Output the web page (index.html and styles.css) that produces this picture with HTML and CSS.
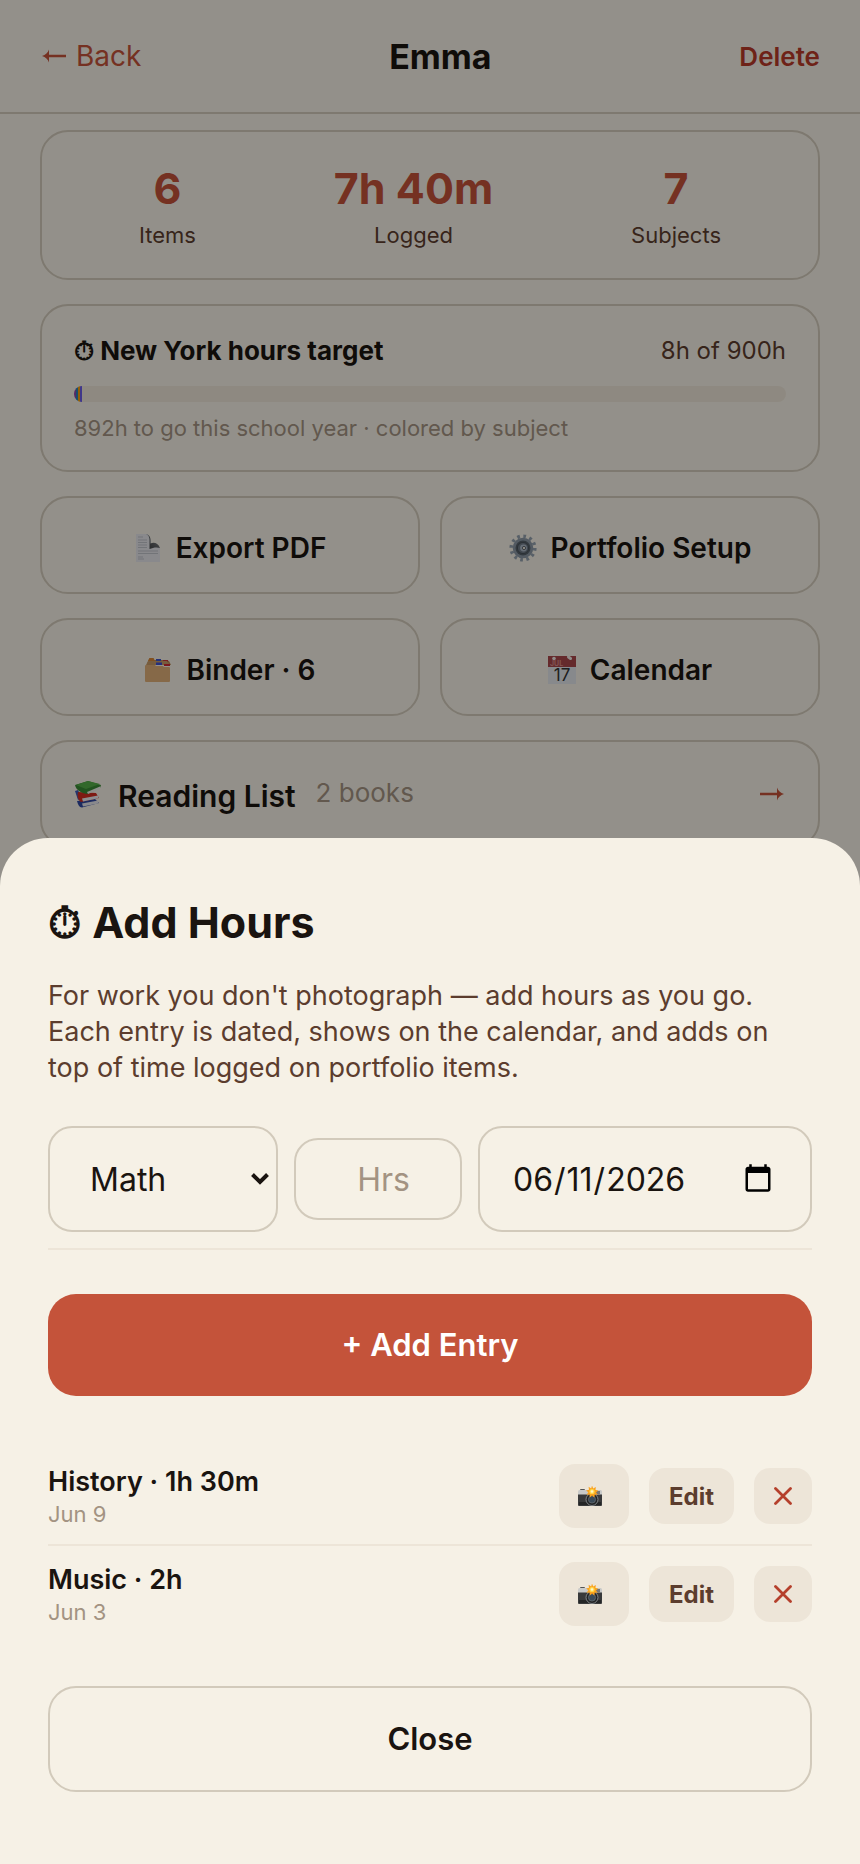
FILE: index.html
```html
<!DOCTYPE html>
<html lang="en">
<head>
  <meta charset="UTF-8" />
  <meta name="viewport" content="width=device-width, initial-scale=1.0" />
  <title>Emma - Add Hours</title>
  <link rel="stylesheet" href="styles.css">
</head>
<body>
  <svg class="defs" width="0" height="0" aria-hidden="true">
    <symbol id="icon-cross" viewBox="0 0 18 18">
      <path d="M1.5 1.5l15 15M16.500 1.5l-15 15" fill="none" stroke="currentColor" stroke-width="2.800" stroke-linecap="round" />
    </symbol>
    <symbol id="icon-camera" viewBox="0 0 24 20">
      <rect x="2" y="3" width="5" height="3" rx="1" fill="#555" />
      <rect x="0" y="4" width="24" height="6" rx="1.500" fill="#c9cac9" />
      <rect x="18" y="5" width="4" height="3" fill="#777" />
      <path d="M0 8.500h24V19a1 1 0 0 1-1 1H1a1 1 0 0 1-1-1z" fill="#38393a" />
      <rect x="1" y="16" width="22" height="3" fill="#242526" />
      <circle cx="14" cy="13.500" r="6" fill="#202224" stroke="#8a8d90" stroke-width="0.9" />
      <circle cx="14" cy="13.500" r="3.600" fill="#3a4a58" stroke="#777c80" stroke-width="0.6" />
      <path d="M14 -0.500l1.200 3 2.600-1.600-.3 3.100 2.800.6-2.300 1.800 1.800 2.400-3-.2-.5 2.900-2.200-2-2.300 2-.3-3-3 .2 1.900-2.400-2.300-1.800 2.900-.7-.4-3 2.600 1.600z" fill="#fba31c" />
      <circle cx="14" cy="5.500" r="2.600" fill="#ffd84a" />
      <circle cx="14" cy="5.500" r="1.300" fill="#fff6c8" />
    </symbol>
  </svg>

  <header class="topbar">
    <a href="#" class="back">
      <svg class="arrow" viewBox="0 0 24 14" aria-hidden="true"><path d="M7 0.500C6 3.500 3.500 6 0 7c3.500 1 6 3.500 7 6.500V8.200h17V5.800H7z" fill="currentColor" /></svg>
      Back
    </a>
    <h1>Emma</h1>
    <button type="button" class="delete">Delete</button>
  </header>

  <main class="page">
    <section class="card stats">
      <div class="stat"><strong>6</strong><span>Items</span></div>
      <div class="stat"><strong>7h 40m</strong><span>Logged</span></div>
      <div class="stat"><strong>7</strong><span>Subjects</span></div>
    </section>

    <section class="card target">
      <div class="target-head">
        <h2>⏱ New York hours target</h2>
        <span>8h of 900h</span>
      </div>
      <div class="bar">
        <i class="seg history" style="width: 0.28%"></i>
        <i class="seg science" style="width: 0.28%"></i>
        <i class="seg math" style="width: 0.28%"></i>
        <i class="seg music" style="width: 0.28%"></i>
      </div>
      <p class="target-note">892h to go this school year · colored by subject</p>
    </section>

    <div class="tiles">
      <button type="button" class="tile">
        <svg class="emoji" viewBox="0 0 28 28" aria-hidden="true">
          <defs>
            <linearGradient id="fold" x1="0" y1="1" x2="1" y2="0"><stop offset="0" stop-color="#3c3e40" /><stop offset="0.600" stop-color="#6c6f72" /><stop offset="1" stop-color="#b0b2b4" /></linearGradient>
          </defs>
          <path d="M2 0h12c2 4 3 8 3 9 3 1 7 2 9 5v14H2z" fill="#e4e5ea" />
          <path d="M12 0c4 1 5 4 4.500 9.500C20 8 24 9 26 14c-3-1-7-.5-10.500 1V6c0-3-1-5-3.500-6z" fill="url(#fold)" />
          <path d="M4 3h5M4 6h9M4 8.500h9M4 11h9M4 13.500h9M4 17h20M4 19.500h20M4 23h5M4 25h6" stroke="#bfc1c8" stroke-width="1" />
        </svg>
        Export PDF
      </button>
      <button type="button" class="tile">
        <svg class="emoji" viewBox="0 0 28 28" aria-hidden="true">
          <circle cx="14" cy="14" r="11.800" fill="none" stroke="#93a0ae" stroke-width="3.600" stroke-dasharray="2.700 3.478" />
          <circle cx="14" cy="14" r="8.300" fill="none" stroke="#8a97a4" stroke-width="4" />
          <circle cx="14" cy="14" r="7.500" fill="#56606a" />
          <circle cx="14" cy="14" r="5.600" fill="#6f7a86" stroke="#48515a" stroke-width="1" />
          <circle cx="14.500" cy="14" r="3.400" fill="#aab6c4" />
          <circle cx="15" cy="14" r="1.600" fill="#f6f1e6" stroke="#424950" stroke-width="0.800" />
        </svg>
        Portfolio Setup
      </button>
      <button type="button" class="tile">
        <svg class="emoji" viewBox="0 0 28 28" aria-hidden="true">
          <path d="M3 8l2-5 1-1h3l1 2h11l4 1 2 4z" fill="#b98b56" />
          <path d="M4 5l1.500-3h4L11 5z" fill="#d98634" />
          <rect x="12" y="3" width="5" height="2" fill="#3f56c8" />
          <rect x="19" y="4" width="5" height="2" fill="#c8323a" />
          <path d="M2 9l2-4h19l3 4z" fill="#c79a66" />
          <rect x="12" y="6.500" width="6" height="2.500" fill="#3c4fd0" />
          <rect x="20" y="8" width="6" height="2" fill="#cc2a36" />
          <path d="M1 10a1 1 0 0 1 1-1h9l1 1h7l1 1h5a1 1 0 0 1 1 1v13a1 1 0 0 1-1 1H2a1 1 0 0 1-1-1z" fill="#e0b078" />
        </svg>
        Binder · 6
      </button>
      <button type="button" class="tile">
        <svg class="emoji" viewBox="0 0 28 28" aria-hidden="true">
          <rect width="28" height="28" fill="#e2e4ea" />
          <rect width="28" height="11" fill="#a8474a" />
          <circle cx="6" cy="2.500" r="1.800" fill="#f0e8e4" />
          <path d="M20.500 1l2 1.500" stroke="#f0e8e4" stroke-width="3" stroke-linecap="round" />
          <text x="2" y="10" class="cal-month">JUL</text>
          <text x="14" y="25" class="cal-day" text-anchor="middle">17</text>
        </svg>
        Calendar
      </button>
    </div>

    <a href="#" class="card reading">
      <svg class="emoji" viewBox="0 0 28 28" aria-hidden="true">
        <path d="M3 21l18-2 4 4-17 4.500c-3 0-4-3-5-6.500z" fill="#3048a0" />
        <path d="M8 23.500l16-3 .5 3L9 26.500z" fill="#e4e4ea" />
        <path d="M1 11l3-1 4 8-4 2z" fill="#3d5bb8" />
        <path d="M4 12l18 1 3 5-18 4c-3-2-4-5-3-10z" fill="#d22c20" />
        <path d="M8 18.500l16-3 .5 2.700L9 21.500z" fill="#ececf0" />
        <path d="M1 5l13-4 13 4-1 3-13 6C7 13 2 10 1 5z" fill="#3a8a36" />
        <path d="M2 5l12-4 12 3-14 5z" fill="#54ae48" />
        <path d="M13 12l13-5.500v2.500l-12 5z" fill="#eceee8" />
      </svg>
      <span class="reading-title">Reading List</span>
      <span class="reading-count">2 books</span>
      <svg class="arrow" viewBox="0 0 24 14" aria-hidden="true"><path d="M17 0.500c1 3 3.500 5.500 7 6.500-3.500 1-6 3.500-7 6.500V8.200H0V5.800h17z" fill="currentColor" /></svg>
    </a>
  </main>

  <div class="backdrop">
    <div class="sheet" role="dialog" aria-labelledby="sheet-title">
      <h2 id="sheet-title">⏱ Add Hours</h2>
      <p class="intro">For work you don't photograph — add hours as you go. Each entry is dated, shows on the calendar, and adds on top of time logged on portfolio items.</p>

      <form id="hours-form" onsubmit="return false">
        <div class="fields">
          <select class="field subject" aria-label="Subject">
            <option>Math</option>
            <option>History</option>
            <option>Music</option>
          </select>
          <input type="number" class="field hours" placeholder="Hrs" aria-label="Hours" />
          <input type="date" class="field date" value="2026-06-11" aria-label="Date" />
        </div>
        <button type="submit" class="add">+ Add Entry</button>
      </form>

      <ul class="entries">
        <li class="entry">
          <div class="entry-text">
            <strong>History · 1h 30m</strong>
            <span>Jun 9</span>
          </div>
          <button type="button" class="chip photo" aria-label="Add photo"><svg aria-hidden="true"><use href="#icon-camera" /></svg></button>
          <button type="button" class="chip">Edit</button>
          <button type="button" class="chip remove" aria-label="Remove"><svg aria-hidden="true"><use href="#icon-cross" /></svg></button>
        </li>
        <li class="entry">
          <div class="entry-text">
            <strong>Music · 2h</strong>
            <span>Jun 3</span>
          </div>
          <button type="button" class="chip photo" aria-label="Add photo"><svg aria-hidden="true"><use href="#icon-camera" /></svg></button>
          <button type="button" class="chip">Edit</button>
          <button type="button" class="chip remove" aria-label="Remove"><svg aria-hidden="true"><use href="#icon-cross" /></svg></button>
        </li>
      </ul>

      <button type="button" class="close">Close</button>
    </div>
  </div>
</body>
</html>
```
FILE: styles.css
```css
* {
  box-sizing: border-box;
}

body {
  margin: 0;
  font-family: Inter, sans-serif;
  background: #f6f1e6;
  color: #1a1410;
}

h1, h2, p, ul {
  margin: 0;
  padding: 0;
}

button, input, select {
  font-family: inherit;
  color: inherit;
  margin: 0;
}

button {
  cursor: pointer;
}

a {
  color: inherit;
  text-decoration: none;
}

.defs {
  position: absolute;
}

.arrow {
  width: 24px;
  height: 14px;
  color: #c4533a;
}

.emoji {
  width: 28px;
  height: 28px;
  flex: none;
}

/* header */
.topbar {
  display: flex;
  align-items: center;
  justify-content: space-between;
  min-height: 114px;
  padding: 0 40px;
  border-bottom: 2px solid #d2cabb;
}

.back {
  display: flex;
  align-items: center;
  gap: 10px;
  padding-left: 2px;
  font-size: 28px;
  color: #c4533a;
}

.topbar h1 {
  font-size: 34px;
  font-weight: 700;
}

.delete {
  padding: 0;
  border: none;
  background: none;
  font-size: 26px;
  font-weight: 600;
  color: #b83a28;
}

/* cards */
.page {
  display: flex;
  flex-direction: column;
  gap: 24px;
  padding: 16px 40px;
}

.card {
  padding: 28px;
  border: 2px solid #d2cabb;
  border-radius: 28px;
}

.stats {
  display: flex;
  justify-content: space-around;
}

.stat {
  display: flex;
  flex-direction: column;
  align-items: center;
  gap: 4px;
}

.stat strong {
  font-size: 43px;
  line-height: 56px;
  color: #c4533a;
}

.stat span {
  font-size: 22px;
  line-height: 30px;
  color: #5c3d2e;
}

.target {
  padding: 28px 32px;
}

.target-head {
  display: flex;
  justify-content: space-between;
  align-items: center;
  line-height: 34px;
}

.target-head h2 {
  font-size: 26px;
  font-weight: 700;
}

.target-head span {
  font-size: 24px;
  color: #5c3d2e;
}

.bar {
  display: flex;
  height: 16px;
  margin: 18px 0 12px;
  border-radius: 8px;
  background: #ede5d8;
  overflow: hidden;
}

.history { background: #8e44ad; }
.science { background: #2980b9; }
.math { background: #f59e0b; }
.music { background: #6c5ce7; }

.target-note {
  font-size: 22px;
  line-height: 28px;
  color: #a39382;
}

.tiles {
  display: grid;
  grid-template-columns: 1fr 1fr;
  gap: 24px 20px;
}

.tile {
  display: flex;
  align-items: center;
  justify-content: center;
  gap: 14px;
  padding: 32px 24px 26px;
  border: 2px solid #d2cabb;
  border-radius: 28px;
  background: none;
  font-size: 28px;
  font-weight: 600;
  line-height: 36px;
}

.cal-month {
  font: 700 7px Inter, sans-serif;
  fill: #d88a8a;
}

.cal-day {
  font: 400 17px Inter, sans-serif;
  fill: #333;
}

.reading {
  display: flex;
  align-items: center;
  padding: 32px;
}

.reading-title {
  margin: 0 20px 0 16px;
  padding-top: 4px;
  font-size: 30px;
  font-weight: 600;
  line-height: 36px;
}

.reading-count {
  font-size: 26px;
  line-height: 34px;
  padding-bottom: 2px;
  color: #a39382;
}

.reading .arrow {
  margin: 0 2px 0 auto;
}

/* bottom sheet */
.backdrop {
  position: fixed;
  inset: 0;
  display: flex;
  align-items: flex-end;
  background: rgba(0, 0, 0, 0.4);
}

.sheet {
  width: 100%;
  padding: 56px 48px 72px;
  border-radius: 48px 48px 0 0;
  background: #f6f1e6;
}

.sheet h2 {
  margin-bottom: 28px;
  font-size: 43px;
  font-weight: 700;
  line-height: 56px;
}

.intro {
  margin-bottom: 40px;
  font-size: 27px;
  line-height: 36px;
  color: #5c3d2e;
}

.fields {
  display: flex;
  align-items: center;
  gap: 16px;
  padding-bottom: 16px;
  border-bottom: 2px solid #ede5d8;
}

.field {
  min-width: 0;
  height: 106px;
  border: 2px solid #d2cabb;
  border-radius: 24px;
  background: transparent;
  font-size: 32px;
}

.subject {
  flex: 1;
  padding: 0 40px;
  appearance: none;
  background: url("data:image/svg+xml,%3Csvg xmlns='http://www.w3.org/2000/svg' width='18' height='12'%3E%3Cpath d='M1.500 1.500L9 9l7.500-7.500' fill='none' stroke='%231a1410' stroke-width='4'/%3E%3C/svg%3E") no-repeat right 7px center;
}

.hours {
  width: 168px;
  height: 82px;
  padding: 0 50px 0 20px;
  text-align: right;
  appearance: textfield;
}

.hours::-webkit-inner-spin-button {
  appearance: none;
  margin: 0;
}

.hours::placeholder {
  color: #a39382;
}

.date {
  width: 334px;
  padding: 0 34px 0 32px;
}

.add {
  width: 100%;
  margin-top: 44px;
  padding: 32px;
  border: none;
  border-radius: 28px;
  background: #c4533a;
  color: #fff;
  font-size: 31px;
  font-weight: 600;
  line-height: 38px;
}

.entries {
  margin: 52px 0 44px;
  list-style: none;
}

.entry {
  display: flex;
  align-items: center;
  gap: 20px;
  padding: 16px 0;
}

.entry + .entry {
  border-top: 2px solid #ede5d8;
}

.entry-text {
  display: flex;
  flex-direction: column;
  flex: 1;
}

.entry-text strong {
  font-size: 27px;
  font-weight: 600;
  line-height: 36px;
}

.entry-text span {
  font-size: 22px;
  line-height: 28px;
  color: #a39382;
}

.chip {
  display: flex;
  align-items: center;
  height: 56px;
  padding: 0 20px;
  border: none;
  border-radius: 16px;
  background: #ede5d8;
  color: #5c3d2e;
  font-size: 24px;
  font-weight: 700;
}

.photo {
  height: 64px;
  padding: 0 27px 0 19px;
}

.photo svg {
  width: 24px;
  height: 20px;
}

.remove {
  color: #b5402c;
}

.remove svg {
  width: 18px;
  height: 18px;
}

.close {
  width: 100%;
  padding: 32px;
  border: 2px solid #d2cabb;
  border-radius: 28px;
  background: none;
  font-size: 31px;
  font-weight: 600;
  line-height: 38px;
}
```
